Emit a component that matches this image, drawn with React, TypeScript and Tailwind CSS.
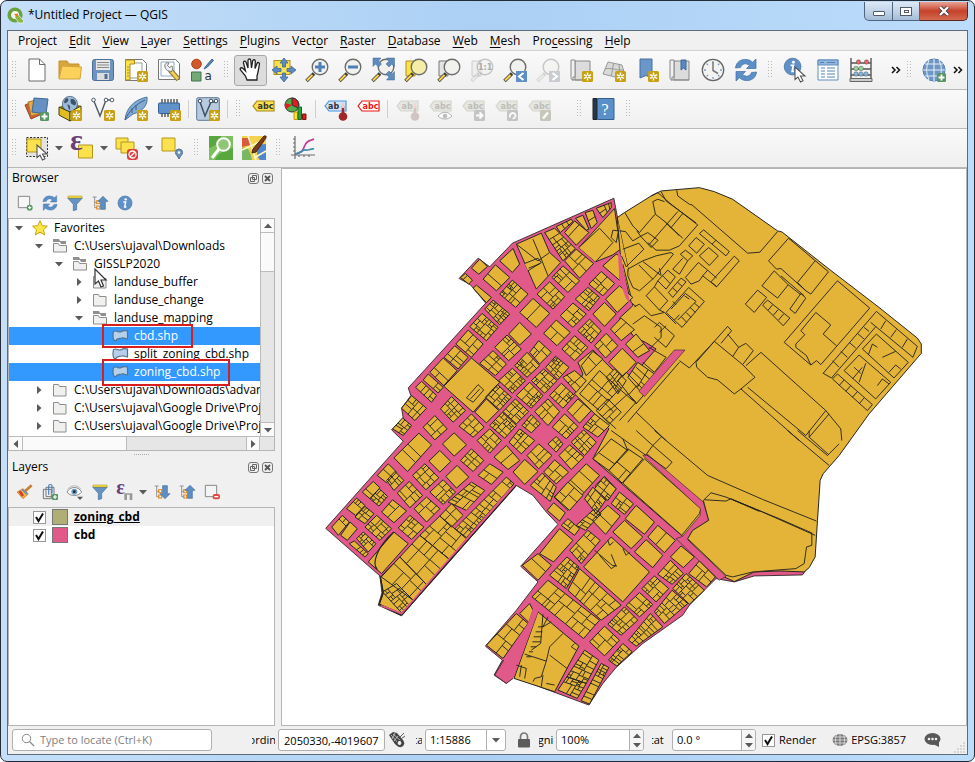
import React from "react";

/* ---------- shared drawing pieces ---------- */

type Kids = { children?: React.ReactNode };

function Ico({ children, s = 24 }: Kids & { s?: number }) {
  return (
    <svg width={s} height={s} viewBox="0 0 24 24" fill="none" className="block shrink-0 overflow-visible" aria-hidden="true">
      {children}
    </svg>
  );
}

const Badge = () => (
  <g>
    <rect x="13" y="13" width="11" height="11" rx="1.5" fill="#c8a011" />
    <path d="M18.5 14.6v7.8M14.9 16.6l7.2 3.8M22.1 16.6l-7.2 3.8" stroke="#fff" strokeWidth="1.5" />
    <circle cx="18.5" cy="18.5" r="1" fill="#c8a011" />
  </g>
);

const Plus = () => (
  <g>
    <rect x="15" y="15" width="9" height="9" rx="1.5" fill="#589464" />
    <path d="M19.5 16.5v6M16.5 19.5h6" stroke="#fff" strokeWidth="1.8" />
  </g>
);

const Lens = ({ fill = "#f1f1ee", faint = false }: { fill?: string; faint?: boolean }) => (
  <g opacity={faint ? 0.35 : 1}>
    <path d="M9 15.5 1.5 23" stroke={faint ? "#999" : "#3f3f3f"} strokeWidth="3.6" />
    <path d="M7.5 17 2 22.5" stroke={faint ? "#ddd" : "#fcd34a"} strokeWidth="2" />
    <circle cx="15" cy="9" r="7.8" fill={fill} stroke="#6d6e6c" strokeWidth="1.4" />
  </g>
);

const Globe = () => (
  <g>
    <circle cx="12" cy="12" r="11" fill="#6f97c4" stroke="#4f7fb5" />
    <path d="M1 12h22M3 6h18M3 18h18M12 1v22M7 2c-3 6-3 14 0 20M17 2c3 6 3 14 0 20" stroke="#e6eef6" strokeWidth="1.1" />
  </g>
);

const Refresh = () => (
  <g fill="#5b8fc7" stroke="#3f6fa5" strokeWidth=".7">
    <path d="M1.5 10C2 4 7 1 12 1.5c3 .2 5 1.2 6.5 2.700L22 1v9.500h-9.500l3-3C12 4.600 8 5.500 6.500 9.500Z" />
    <path d="M22.500 14C22 20 17 23 12 22.500c-3-.2-5-1.200-6.500-2.700L2 23v-9.500h9.500l-3 3c3.500 2.900 7.500 2 9-2Z" />
  </g>
);

const Info = () => (
  <g>
    <circle cx="12" cy="12" r="10.500" fill="#5f91c8" stroke="#44719f" />
    <circle cx="13" cy="6.500" r="1.800" fill="#fff" />
    <path d="M9.500 10.500h3.500l-1.500 7.500h2.500" stroke="#fff" strokeWidth="2.200" />
  </g>
);

const Funnel = () => (
  <g>
    <path d="M1 4.500h22L14.500 14v8l-5 1.500V14Z" fill="#6493c4" stroke="#3f6c9b" />
    <path d="M1.500 1.500h21v3h-21Z" fill="#fbe24c" stroke="#a98e1c" strokeWidth=".8" />
  </g>
);

const TreeArrow = ({ up }: { up: boolean }) => (
  <g>
    <path d="M1 3h6M4 3v16h4M4 11h4" stroke="#888" strokeWidth="1.300" />
    <rect x="7" y="8.500" width="4.500" height="4.500" stroke="#e58a1a" strokeWidth="1.600" />
    <rect x="7" y="16.500" width="4.500" height="4.500" stroke="#e58a1a" strokeWidth="1.600" />
    <path d={up ? "M16.500 2 24 9.500h-4v12h-7v-12H9Z" : "M16.500 22 24 14.500h-4v-12h-7v12H9Z"} fill="#5d8fc5" stroke="#3d6b9c" />
  </g>
);

const Abc = ({ t = "abc", fill = "#fbe14d", edge = "#a78a18", ink = "#333", x = 6.5 }: { t?: string; fill?: string; edge?: string; ink?: string; x?: number }) => (
  <g>
    <path d="M2 9 6 4h17v10H6Z" fill={fill} stroke={edge} strokeWidth="1.200" />
    <text x={x} y="11.500" fontSize="8" fontWeight="700" fill={ink} fontFamily="DejaVu Sans">{t}</text>
  </g>
);

const GrayAbc = ({ t, children }: Kids & { t?: string }) => (
  <Ico><g opacity=".75"><Abc t={t} fill="#e2e2da" edge="#c9c9c2" ink="#aaaaa5" />{children}</g></Ico>
);

const Pin = ({ c }: { c: string }) => (
  <g><path d="M20 9v8" stroke={c} strokeWidth="2.500" /><path d="M20 6v5" stroke="#f3c9c9" strokeWidth="2.500" /><circle cx="20" cy="19.500" r="4.300" fill={c} /></g>
);

const Arrow = () => <path d="M12 9v12.500l3-2.500 2.500 5 2.500-1.300-2.500-4.700h4.500Z" fill="#fff" stroke="#555" strokeWidth="1.100" />;

const Eps = ({ x, y, s }: { x: number; y: number; s: number }) => (
  <text x={x} y={y} fontSize={s} fill="#6b3f78" fontWeight="700" fontFamily="Liberation Serif">ε</text>
);

/* ---------- toolbar icons ---------- */

const NewIcon = <Ico><path d="M4 1h10.500L20 6.500V23H4Z" fill="#fff" stroke="#6b6b6b" /><path d="M14.500 1v5.500H20" stroke="#6b6b6b" /></Ico>;
const OpenIcon = <Ico><path d="M1 20V3h8l2 3h10v14Z" fill="#d9a53b" stroke="#c0912f" /><path d="m1 21 3-13 19.500 1L22 21Z" fill="#fbd15b" stroke="#d3a33c" /></Ico>;
const SaveIcon = <Ico><rect x="1.500" y="1.500" width="21" height="21" rx="2" fill="#6d94c1" stroke="#4c6f98" /><path d="M5 2h14v10H5Z" fill="#e8e8e8" /><path d="M6 4.500h12M6 7h12M6 9.500h12" stroke="#888" /><path d="M6 15h12v7H6Z" fill="#dcdcdc" /><path d="M13.500 16h3v5h-3Z" fill="#4c6f98" /></Ico>;
const LayoutIcon = <Ico><path d="M1.500 1.500h17l4 4v17h-21Z" fill="#fff" stroke="#777" /><path d="M5 5h13v15H5Z" stroke="#999" /><path d="M1.500 2h9v4H6v16H1.500Z" fill="#fbe04b" stroke="#a98c1f" /><path d="M3 9h2M3 12h2M3 15h2M3 18h2" stroke="#a98c1f" /><Badge /></Ico>;
const ManagerIcon = <Ico><path d="M1.500 1.500h17l4 4v16h-21Z" fill="#fff" stroke="#777" /><path d="M4 4h13v14H4Z" stroke="#91a9c4" /><path d="m13 12 8.500 9.500" stroke="#8a7430" strokeWidth="5" /><path d="m13 12 8 9" stroke="#f0cf54" strokeWidth="3" /><path d="M8 9c-1-4 3-5 4-4l-1.500 2.500 2 2L15 8c1.500 2 .5 5-1 6l-2-1c-2 0-3.500-2-4-4Z" fill="#eee" stroke="#777" /></Ico>;
const StyleIcon = <Ico><circle cx="6.500" cy="6" r="4.800" fill="#d4572a" stroke="#a74420" /><path d="M1.500 14h9.500v9H1.500Z" fill="#73ab77" stroke="#44744a" /><path d="m14 11 2-3 6-7 1.500 1.500-6 6.500Z" fill="#5a86b7" stroke="#3c658f" /><text x="14.500" y="22" fontSize="12" fill="#333" fontFamily="DejaVu Sans">a</text></Ico>;
const HandIcon = <Ico><path d="M8 22 6.500 18 1.500 12c-1-2 1-3 2.500-1.500L6.500 13 4.500 5c-.4-2 2-2.500 2.700-.5L9 10V2.500C9 .5 11.500.5 11.800 2.500L12.500 10l1.200-7c.5-2 2.800-1.500 2.600.5L16 10.500l2-5c.7-1.700 2.800-1 2.400.8L19 14l-1 4v4Z" fill="#fff" stroke="#222" strokeWidth="1.300" /></Ico>;
const PanSelIcon = <Ico><rect x="2" y="2.500" width="16" height="14" fill="#fbe14c" stroke="#ad9020" /><path d="m12 0 4 5h-2.500v4h-3V5H8ZM12 24l4-5h-2.500v-4h-3v4H8ZM0 12l5-4v2.500h4v3H5V16ZM24 12l-5-4v2.500h-4v3h4V16Z" fill="#5e8cc0" stroke="#3d6899" strokeWidth=".8" /></Ico>;
const ZoomInIcon = <Ico><Lens /><path d="M15 4v10M10 9h10" stroke="#4f7fb5" strokeWidth="3" /></Ico>;
const ZoomOutIcon = <Ico><Lens /><path d="M10 9h10" stroke="#4f7fb5" strokeWidth="3.200" /></Ico>;
const ZoomFullIcon = <Ico><Lens /><path d="M2 0h8L7.500 3l3 3-3 3-3-3L2 8.500ZM23.500 0h-8L18 3l-3 3 3 3 3-3 2.500 2.500ZM23.500 22h-8l2.500-3-3-3 3-3 3 3 2.500-2.500Z" fill="#5f8cbd" stroke="#3d6899" strokeWidth=".5" /></Ico>;
const ZoomSelIcon = <Ico><path d="M2 3h9v15H2Z" fill="#fbe14c" stroke="#ad9020" /><Lens fill="#f5ecaa" /></Ico>;
const ZoomLayerIcon = <Ico><path d="M2 3h9v15H2Z" fill="#e4e4e4" stroke="#777" /><Lens /></Ico>;
const ZoomNativeIcon = <Ico><path d="M2 3h9v15H2Z" fill="#eee" stroke="#ccc" /><Lens faint /><text x="8" y="12" fontSize="8" fontWeight="700" fill="#aaa" fontFamily="DejaVu Sans">1:1</text></Ico>;
const ZoomLastIcon = <Ico><Lens /><rect x="13" y="13" width="11" height="11" fill="#5f8fc6" /><path d="m20.500 15-4.500 3.500 4.500 3.500" stroke="#fff" strokeWidth="2" /></Ico>;
const ZoomNextIcon = <Ico><Lens faint /><rect x="13" y="13" width="11" height="11" fill="#c9cdd1" /><path d="m16.500 15 4.500 3.500-4.500 3.500" stroke="#fff" strokeWidth="2" /></Ico>;
const Scroll = () => <g><path d="M6 3h15v19H6Z" fill="#dcdcdc" stroke="#888" /><path d="M2 2h4v17H4v3c-2 0-2-2-2-4Z" fill="#f0f0f0" stroke="#888" /><path d="M3 22h18" stroke="#888" /></g>;
const MapViewIcon = <Ico><Scroll /><Badge /></Ico>;
const View3dIcon = <Ico><path d="m1 16 5-12 14 3 3 11-10 1Z" fill="#d9d9d6" stroke="#999" /><path d="M3 11c6-2 12 2 19 1M12 5c-2 4-1 8-3 13M17 6l1 12" stroke="#999" /><Badge /></Ico>;
const BookmarkIcon = <Ico><path d="M5 1h12v19l-6-2.500L5 20Z" fill="#6a97c9" stroke="#44719f" /><Badge /></Ico>;
const BookmarksIcon = <Ico><Scroll /><path d="M13 2h5v10l-2.500-2L13 12Z" fill="#5a89bf" stroke="#3d6899" /></Ico>;
const ClockIcon = <Ico><circle cx="12" cy="12" r="10.700" fill="#f3f3f1" stroke="#666" strokeWidth="1.300" /><path d="M12 3v2M12 19v2M3 12h2M19 12h2M5.600 5.600 7 7M17 17l1.400 1.400M5.600 18.400 7 17M17 7l1.400-1.400" stroke="#7b9cc0" strokeWidth="1.300" /><path d="M12 4v8.500l5 3" stroke="#777" strokeWidth="1.500" /></Ico>;
const RefreshIcon = <Ico><Refresh /></Ico>;
const IdentifyIcon = <Ico><g transform="translate(0 -1) scale(.8)"><Info /></g><Arrow /></Ico>;
const TableIcon = <Ico><path d="M2 2h20v20H2Z" fill="#fff" stroke="#5f8dbd" /><path d="M2 2h20v5H2Z" fill="#93b7de" stroke="#5f8dbd" /><path d="M5 10h4M5 13h4M5 16h4M5 19h4M11 10h8M11 13h8M11 16h8M11 19h8M4 4.500h4M11 4.500h8" stroke="#5782b0" /></Ico>;
const AbacusIcon = <Ico><path d="M2 0v22M22 0v22M2 5h20M2 11h20M2 17h20" stroke="#555" strokeWidth="1.400" /><path d="M1 20.500h22v3H1Z" fill="#ccc" stroke="#666" /><g stroke="#555" strokeWidth=".5"><g fill="#ee6565"><circle cx="9.500" cy="4" r="2.200" /><circle cx="17.500" cy="4" r="2.200" /></g><g fill="#94d69a"><circle cx="7" cy="10.500" r="2.300" /><circle cx="12" cy="10.500" r="2.300" /></g><g fill="#86b8e4"><circle cx="7" cy="16" r="2.200" /><circle cx="12" cy="16" r="2.200" /><circle cx="17" cy="16" r="2.200" /></g></g></Ico>;
const WebIcon = <Ico><Globe /><Plus /></Ico>;

const SourcesIcon = <Ico><path d="m0 8 12-5 5 14-11 5Z" fill="#d25c34" stroke="#9b4325" /><path d="m3 5 12-3 3 14-12 3Z" fill="#e5a84a" stroke="#aa782b" /><path d="m9 1 14 1-2 15-14-2Z" fill="#6490c2" stroke="#3f6997" /><Plus /></Ico>;
const GeoPkgIcon = <Ico><path d="m1 10 11-5 11 4-11 6Z" fill="#8f7a17" /><g transform="translate(4 -1) scale(.66)"><circle cx="12" cy="12" r="11.500" fill="#9cb9d8" stroke="#3c536b" /><path d="M5 4c4-2 6 1 4 4s-5 4-6 1ZM13 5c5-2 9 3 8 7s-7 1-8-2ZM8 13c4 0 6 4 3 9Z" fill="#3c536b" /></g><path d="M1 10 12 15v9L1 18Z" fill="#e1be1d" stroke="#413c19" /><path d="m12 15 11-6v9l-11 6Z" fill="#fcf054" stroke="#413c19" /><Badge /></Ico>;
const ShapeIcon = <Ico><path d="M2.500 3 9 19l6-16 6 0" stroke="#505a66" strokeWidth="1.400" /><g fill="#fff" stroke="#505a66"><circle cx="2.500" cy="3" r="1.800" /><circle cx="15" cy="3" r="1.800" /><circle cx="21" cy="3" r="1.800" /></g><Badge /></Ico>;
const FeatherIcon = <Ico><path d="M1 23C2 12 9 3 23 0c1 7-3 14-14 17Z" fill="#83abd2" stroke="#4b76a3" /><path d="M1 23C5 14 12 7 21 3M8 11v5M12 8v5" stroke="#355f8c" /><Badge /></Ico>;
const ChipIcon = <Ico><path d="M5 2v4M8 2v4M11 2v4M14 2v4M17 2v4M20 2v4M5 16v4M8 16v4M11 16v4" stroke="#444" strokeWidth="1.300" /><rect x="1.500" y="6" width="21" height="10.500" rx="1" fill="#5f92ca" stroke="#345f8f" /><Badge /></Ico>;
const VirtualIcon = <Ico><rect x=".7" y=".7" width="22.600" height="22.600" rx="1.500" fill="#b7cae0" stroke="#5e7896" /><path d="m4 5 5 14 6-14 4 0" stroke="#3d4f63" strokeWidth="1.500" /><g fill="#fff" stroke="#3d4f63"><circle cx="4" cy="4" r="1.800" /><circle cx="15" cy="4" r="1.800" /><circle cx="20" cy="4" r="1.800" /></g><Badge /></Ico>;
const LabelIcon = <Ico><Abc /></Ico>;
const DiagramIcon = <Ico><circle cx="8" cy="8" r="7" fill="#4fae48" stroke="#333" /><path d="M8 8V1a7 7 0 0 1 6 10Z" fill="#dd1d24" stroke="#333" /><path d="M8 8 2 12a7 7 0 0 1-1-6Z" fill="#dd1d24" /><path d="M10 15h3.500v7.500H10Z" fill="#fae12c" stroke="#c99a00" /><path d="M14 10h3.500v12.500H14Z" fill="#2aa23a" stroke="#17662a" /><path d="M18.500 17H22v5.500h-3.500Z" fill="#d51f1f" stroke="#811" /></Ico>;
const PinLabelIcon = <Ico><Abc t="ab" fill="#cfe3fb" edge="#4696e5" x={5} /><Pin c="#a32626" /></Ico>;
const RedLabelIcon = <Ico><Abc fill="#fff" edge="#f01414" ink="#f01414" /></Ico>;
const HelpIcon = <Ico><path d="M1 1.500h4v21H1Z" fill="#24384d" stroke="#222" /><path d="M5.500 1.500H22v21H5.500Z" fill="#5b8fc9" stroke="#345f8f" /><text x="9.500" y="18" fontSize="16" fill="#fff" fontFamily="Liberation Serif">?</text></Ico>;
const Ylw = "#fbe14c";
const YlwEdge = "#b5961c";
const SelectIcon = <Ico><rect x="1.500" y="1.500" width="21" height="19" fill="#e2e2e2" stroke="#333" strokeDasharray="2 1.500" /><path d="M2 3h14v13H2Z" fill={Ylw} stroke={YlwEdge} /><Arrow /></Ico>;
const SelExprIcon = <Ico><path d="M8.500 9h14v13h-14Z" fill={Ylw} stroke={YlwEdge} /><Eps x={0} y={14} s={30} /></Ico>;
const DeselectIcon = <Ico><path d="M1 2h12v11H1Z" fill={Ylw} stroke={YlwEdge} /><path d="M6 6h13v11H6Z" fill={Ylw} stroke={YlwEdge} /><rect x="12" y="13" width="11" height="11" rx="3" fill="#e13c3c" /><circle cx="17.500" cy="18.500" r="3.500" stroke="#fff" strokeWidth="1.300" /><path d="m15 21 5-5" stroke="#fff" strokeWidth="1.300" /></Ico>;
const SelLocIcon = <Ico><path d="M2 2h13v13H2Z" fill={Ylw} stroke={YlwEdge} /><path d="M19 23c-1-3-3.500-4-3.500-6.500a3.500 3.500 0 0 1 7 0C22.500 19 20 20 19 23Z" fill="#6c94bd" stroke="#4b708f" /><circle cx="19" cy="16.500" r="1.200" fill="#fff" /></Ico>;
const QuickOsmIcon = <Ico><rect width="24" height="24" fill="#58a83f" /><path d="M0 12c8-2 12-8 12-12h12v12C16 14 8 18 6 24H0Z" fill="#7dc05f" /><path d="M10.500 12.500 3 22" stroke="#fff" strokeWidth="3" /><circle cx="14.500" cy="8.500" r="6.300" fill="#8fc675" stroke="#fff" strokeWidth="2" /></Ico>;
const OsmIcon = <Ico><rect width="24" height="24" fill="#f3d34d" /><path d="M0 12c6-2 8 2 10 12H0Z" fill="#79b763" /><path d="M0 2h7l2 7-9 2Z" fill="#d95a3e" /><path d="M13 9c5 4-1 8 5 15h6V8Z" fill="#4f86cf" /><path d="M0 14 24 3M6 0l8 24M12 22l12-7" stroke="#fff6c4" strokeWidth="1.600" /><path d="m10 17 4-1L24 2V0h-2L11 13Z" fill="#7a3d17" stroke="#4d260d" /></Ico>;
const PlotIcon = <Ico><path d="M4 0v23M0 19h24M2 3h2M2 7h2M2 11h2M2 15h2M8 19v2M13 19v2M18 19v2" stroke="#6d6d6d" strokeWidth="1.200" /><path d="M4 18c7-1 7-2 10-9 2-5 5-4 9-6" stroke="#c03a94" strokeWidth="1.700" /><path d="M4 18c5 0 7-5 11-4 3 .7 5-2 8-1" stroke="#3c8da9" strokeWidth="1.700" /></Ico>;

/* ---------- toolbar layout ---------- */

function Tool({ label, active = false, children }: Kids & { label: string; active?: boolean }) {
  return (
    <button
      type="button"
      aria-label={label}
      title={label}
      className={
        active
          ? "flex h-[31px] w-[33px] shrink-0 items-center justify-center rounded-[3px] border border-[#a8a8a8] bg-[#dcdcdc]"
          : "flex h-[31px] w-[33px] shrink-0 items-center justify-center"
      }
    >
      {children}
    </button>
  );
}

function Handle({ first = false }: { first?: boolean }) {
  return (
    <span className={first ? "flex w-3 shrink-0 justify-center" : "flex w-4 shrink-0 justify-center"}>
      <svg width="5" height="18" aria-hidden="true">
        {[0, 3, 6, 9, 12, 15].map((y) => (
          <g key={y} fill="#b9b9b9"><rect y={y} width="1" height="1" /><rect x="3" y={y} width="1" height="1" /></g>
        ))}
      </svg>
    </span>
  );
}

const Sep = () => <span className="flex w-[6px] shrink-0 justify-center"><span className="h-[18px] w-px bg-[#cfcfcf]" /></span>;

function DropArrow({ label }: { label: string }) {
  return (
    <button type="button" aria-label={label} className="flex h-6 w-3 shrink-0 items-center justify-center">
      <Tri dir="down" />
    </button>
  );
}

function Tri({ dir }: { dir: "down" | "right" | "up" | "left" }) {
  const d = { down: "M0 2h8L4 6.500Z", right: "M2 0v8l4.500-4Z", up: "M0 6h8L4 1.500Z", left: "M6 0v8L1.500 4Z" }[dir];
  return <svg width="8" height="8" viewBox="0 0 8 8" aria-hidden="true"><path d={d} fill="#5a5a5a" /></svg>;
}

const bar = "flex items-center overflow-hidden border-b border-[#b9b9b9] bg-linear-to-b from-[#fafafa] to-[#efefef]";

function More({ end = false }: { end?: boolean }) {
  return (
    <button type="button" aria-label="More tools" className={end ? "flex w-4 shrink-0 justify-center" : "flex w-6 shrink-0 justify-end"}>
      <svg width="10" height="8" viewBox="0 0 10 8" aria-hidden="true"><path d="m1 1 3 3-3 3M5.500 1l3 3-3 3" stroke="#111" strokeWidth="1.500" fill="none" /></svg>
    </button>
  );
}

function Toolbars() {
  return (
    <div className="shrink-0">
      <div className={`${bar} h-[39px]`}>
        <Handle first />
        <Tool label="New Project">{NewIcon}</Tool>
        <Tool label="Open Project">{OpenIcon}</Tool>
        <Tool label="Save Project">{SaveIcon}</Tool>
        <Tool label="New Print Layout">{LayoutIcon}</Tool>
        <Tool label="Layout Manager">{ManagerIcon}</Tool>
        <Tool label="Style Manager">{StyleIcon}</Tool>
        <Handle />
        <Tool label="Pan Map" active>{HandIcon}</Tool>
        <Tool label="Pan Map to Selection">{PanSelIcon}</Tool>
        <Tool label="Zoom In">{ZoomInIcon}</Tool>
        <Tool label="Zoom Out">{ZoomOutIcon}</Tool>
        <Tool label="Zoom Full">{ZoomFullIcon}</Tool>
        <Tool label="Zoom to Selection">{ZoomSelIcon}</Tool>
        <Tool label="Zoom to Layer">{ZoomLayerIcon}</Tool>
        <Tool label="Zoom to Native Resolution">{ZoomNativeIcon}</Tool>
        <Tool label="Zoom Last">{ZoomLastIcon}</Tool>
        <Tool label="Zoom Next">{ZoomNextIcon}</Tool>
        <Tool label="New Map View">{MapViewIcon}</Tool>
        <Tool label="New 3D Map View">{View3dIcon}</Tool>
        <Tool label="New Spatial Bookmark">{BookmarkIcon}</Tool>
        <Tool label="Show Spatial Bookmarks">{BookmarksIcon}</Tool>
        <Tool label="Temporal Controller">{ClockIcon}</Tool>
        <Tool label="Refresh">{RefreshIcon}</Tool>
        <Handle />
        <Tool label="Identify Features">{IdentifyIcon}</Tool>
        <Tool label="Open Attribute Table">{TableIcon}</Tool>
        <Tool label="Field Calculator">{AbacusIcon}</Tool>
        <More />
        <Handle />
        <Tool label="Add Web Layer">{WebIcon}</Tool>
        <More end />
      </div>
      <div className={`${bar} h-[39px]`}>
        <Handle first />
        <Tool label="Data Source Manager">{SourcesIcon}</Tool>
        <Tool label="New GeoPackage Layer">{GeoPkgIcon}</Tool>
        <Tool label="New Shapefile Layer">{ShapeIcon}</Tool>
        <Tool label="New SpatiaLite Layer">{FeatherIcon}</Tool>
        <Tool label="New Temporary Scratch Layer">{ChipIcon}</Tool>
        <Sep />
        <Tool label="New Virtual Layer">{VirtualIcon}</Tool>
        <Sep />
        <Handle />
        <Tool label="Layer Labeling Options">{LabelIcon}</Tool>
        <Tool label="Layer Diagram Options">{DiagramIcon}</Tool>
        <Sep />
        <Tool label="Highlight Pinned Labels">{PinLabelIcon}</Tool>
        <Tool label="Toggle Unplaced Labels">{RedLabelIcon}</Tool>
        <Sep />
        <Tool label="Pin Labels"><GrayAbc t="ab"><Pin c="#c9b5b5" /></GrayAbc></Tool>
        <Tool label="Show Labels"><GrayAbc><path d="M10 19c4-5 10-5 14 0-4 4-10 4-14 0Z" fill="#fff" stroke="#999" /><circle cx="17" cy="19" r="2.300" fill="#aaa" /></GrayAbc></Tool>
        <Tool label="Move Label"><GrayAbc><rect x="13" y="13" width="11" height="11" rx="1.500" fill="#b5b5b5" /><path d="M15 18.500h6M18.500 15.500l3 3-3 3" stroke="#fff" strokeWidth="2" /></GrayAbc></Tool>
        <Tool label="Rotate Label"><GrayAbc><rect x="13" y="13" width="11" height="11" rx="1.500" fill="#b5b5b5" /><path d="M16 20.500c-1-5 5-6 5.500-2 .3 2-1.500 2-2.500 3.500" stroke="#fff" strokeWidth="1.800" /></GrayAbc></Tool>
        <Tool label="Change Label"><GrayAbc><rect x="13" y="13" width="11" height="11" rx="1.500" fill="#b9b8a8" /><path d="m16 21.500 5-6" stroke="#fff" strokeWidth="2.300" /></GrayAbc></Tool>
        <span className="w-4" />
        <Handle />
        <Tool label="Help Contents">{HelpIcon}</Tool>
        <Handle />
      </div>
      <div className={`${bar} h-[39px]`}>
        <Handle first />
        <Tool label="Select Features">{SelectIcon}</Tool>
        <DropArrow label="Select options" />
        <Tool label="Select by Expression">{SelExprIcon}</Tool>
        <DropArrow label="Expression options" />
        <Tool label="Deselect Features">{DeselectIcon}</Tool>
        <DropArrow label="Deselect options" />
        <Tool label="Select by Location">{SelLocIcon}</Tool>
        <Handle />
        <Tool label="QuickOSM">{QuickOsmIcon}</Tool>
        <Tool label="OSM Downloader">{OsmIcon}</Tool>
        <Handle />
        <Tool label="Data Plotly">{PlotIcon}</Tool>
      </div>
    </div>
  );
}

/* ---------- title and menu ---------- */

function TitleBar() {
  const glass = "flex h-[19px] items-center justify-center border border-t-0 border-[#4e6580] bg-linear-to-b from-[#dce8f5] via-[#c2d4e8] to-[#a4bdd8]";
  return (
    <header className="flex h-7 shrink-0 items-start">
      <svg width="17" height="17" viewBox="0 0 17 17" className="mt-[5px] shrink-0" aria-hidden="true">
        <circle cx="8" cy="8" r="5.800" fill="#f4f8f0" stroke="#6aa23f" strokeWidth="3.600" />
        <path d="m8 8 3-.5 5.500 6V16H12L8 11Z" fill="#8db94a" stroke="#f4f8f0" strokeWidth=".7" />
        <path d="m7 7 4-.5-.5 4Z" fill="#ee7913" />
      </svg>
      <h1 className="ml-1 mt-[3px] flex-1 text-[12px] leading-5 text-black">*Untitled Project — QGIS</h1>
      <div className="flex">
        <button type="button" aria-label="Minimize" className={`${glass} w-[29px] rounded-bl-[5px]`}>
          <span className="mt-1 h-[5px] w-3 rounded-[1px] border border-[#505a68] bg-white" />
        </button>
        <button type="button" aria-label="Maximize" className={`${glass} w-[27px] border-l-0`}>
          <span className="flex h-[9px] w-3 items-center justify-center border border-[#505a68] bg-white">
            <span className="h-[3px] w-[5px] border border-[#505a68]" />
          </span>
        </button>
        <button type="button" aria-label="Close" className="flex h-[19px] w-12 items-center justify-center rounded-br-[5px] border border-l-0 border-t-0 border-[#5b2721] bg-linear-to-b from-[#e6a294] via-[#c5402a] to-[#d36a4f]">
          <svg width="12" height="10" viewBox="0 0 12 10" aria-hidden="true"><path d="m2 1 8 8M10 1 2 9" stroke="#4b3a44" strokeWidth="4" /><path d="m2 1 8 8M10 1 2 9" stroke="#fff" strokeWidth="2.300" /></svg>
        </button>
      </div>
    </header>
  );
}

const menus: [string, string, string][] = [
  ["Pro", "j", "ect"], ["", "E", "dit"], ["", "V", "iew"], ["", "L", "ayer"], ["", "S", "ettings"], ["", "P", "lugins"],
  ["Vect", "o", "r"], ["", "R", "aster"], ["", "D", "atabase"], ["", "W", "eb"], ["", "M", "esh"], ["Pro", "c", "essing"], ["", "H", "elp"],
];

function MenuBar() {
  return (
    <nav className="flex h-5 shrink-0 items-center border-b border-[#d2d2d2] bg-[#f0f0f0] pl-1">
      {menus.map(([a, u, b]) => (
        <button key={a + u + b} type="button" className="px-[6px] text-[12px] leading-[18px]">
          {a}<span className="underline underline-offset-2">{u}</span>{b}
        </button>
      ))}
    </nav>
  );
}

/* ---------- docks ---------- */

function DockTitle({ name }: { name: string }) {
  const b = "flex size-[11px] items-center justify-center rounded-[3px] border border-[#777]";
  return (
    <div className="flex h-5 shrink-0 items-center gap-[3px] pl-1 pr-[2px]">
      <h2 className="flex-1 text-[12px] leading-5">{name}</h2>
      <button type="button" aria-label={`Float ${name}`} className={b}>
        <svg width="7" height="7" viewBox="0 0 7 7" aria-hidden="true"><path d="M2.500.5h4v4h-4ZM.5 2.500h4v4h-4Z" fill="none" stroke="#666" /></svg>
      </button>
      <button type="button" aria-label={`Close ${name}`} className={b}>
        <svg width="7" height="7" viewBox="0 0 7 7" aria-hidden="true"><path d="m1 1 5 5M6 1 1 6" stroke="#555" strokeWidth="1.800" /></svg>
      </button>
    </div>
  );
}

function Small({ label, children }: Kids & { label: string }) {
  return <button type="button" aria-label={label} title={label} className="flex h-6 w-[25px] shrink-0 items-center justify-center"><Ico s={16}>{children}</Ico></button>;
}

const Folder = ({ open = false }: { open?: boolean }) => (
  <svg width="16" height="16" viewBox="0 0 16 16" aria-hidden="true">
    {open && <path d="M1 1h6l1 2h6v3h-5L8 4H1Z" fill="#8f8f8f" />}
    <path d={open ? "M1.500 5.500h5l1 2h7v6.500h-13Z" : "M1.500 2.500h5l1 2h6.500v9.500h-12.500Z"} fill="#f0f0ee" stroke="#8d8d8d" />
  </svg>
);

const Star = () => <svg width="16" height="16" viewBox="0 0 16 16" aria-hidden="true"><path d="m8 .8 2.200 4.900 5.200.5-3.900 3.500 1.100 5.300L8 12.200 3.400 15l1.100-5.300L.6 6.200l5.200-.5Z" fill="#fde84a" stroke="#c6a10e" /></svg>;

const Poly = () => <svg width="17" height="16" viewBox="0 0 17 16" aria-hidden="true"><path d="M1.500 3.500c3-2 5 2 8 0 2-1.500 4-1 6-.5v8c-3 0-3-2-6-1-3 .8-5 .5-6 3-3-1-2.500-7-2-9.500Z" fill="#b6d0ea" stroke="#55738f" strokeWidth="1.200" /></svg>;

type Row = { level: number; text: string; arrow?: "down" | "right"; kind: "star" | "open" | "folder" | "poly"; on?: boolean };
const rows: Row[] = [
  { level: 0, text: "Favorites", arrow: "down", kind: "star" },
  { level: 1, text: "C:\\Users\\ujaval\\Downloads", arrow: "down", kind: "open" },
  { level: 2, text: "GISSLP2020", arrow: "down", kind: "open" },
  { level: 3, text: "landuse_buffer", arrow: "right", kind: "folder" },
  { level: 3, text: "landuse_change", arrow: "right", kind: "folder" },
  { level: 3, text: "landuse_mapping", arrow: "down", kind: "open" },
  { level: 4, text: "cbd.shp", kind: "poly", on: true },
  { level: 4, text: "split_zoning_cbd.shp", kind: "poly" },
  { level: 4, text: "zoning_cbd.shp", kind: "poly", on: true },
  { level: 1, text: "C:\\Users\\ujaval\\Downloads\\advanc", arrow: "right", kind: "folder" },
  { level: 1, text: "C:\\Users\\ujaval\\Google Drive\\Proje", arrow: "right", kind: "folder" },
  { level: 1, text: "C:\\Users\\ujaval\\Google Drive\\Proje", arrow: "right", kind: "folder" },
];
const indent = ["pl-1", "pl-6", "pl-11", "pl-16", "pl-[84px]"];

function TreeRow({ r }: { r: Row }) {
  return (
    <li className={`relative flex h-[18px] items-center whitespace-nowrap text-[12px] leading-[18px] ${indent[r.level]} ${r.on ? "bg-[#3399ff] text-white" : ""}`}>
      <span className="flex w-[19px] shrink-0 pl-[2px]">{r.arrow && <Tri dir={r.arrow} />}</span>
      <span className="w-[22px] shrink-0">{r.kind === "star" ? <Star /> : r.kind === "poly" ? <Poly /> : <Folder open={r.kind === "open"} />}</span>
      {r.text}
      {r.on && <span className={r.text === "cbd.shp" ? "absolute -top-[3px] left-[93px] z-10 h-6 w-[91px] border-2 border-[#d81f1f]" : "absolute -top-[4px] left-[93px] z-10 h-[27px] w-[128px] border-2 border-[#d81f1f]"} />}
      {r.text === "GISSLP2020" && (
        <svg width="14" height="20" viewBox="0 0 14 20" className="absolute left-[85px] top-[13px] z-10" aria-hidden="true">
          <path d="M1 1v15l3.500-3 2.500 6 2.500-1-2.500-6h5Z" fill="#fff" stroke="#333" strokeWidth="1.200" />
        </svg>
      )}
    </li>
  );
}

function Browser() {
  return (
    <section className="flex flex-col" aria-label="Browser">
      <DockTitle name="Browser" />
      <div className="flex h-[30px] items-center pl-1">
        <Small label="Add Selected Layers"><path d="M2 2h17v17H2Z" fill="#f6f6f6" stroke="#888" strokeWidth="1.500" /><circle cx="19" cy="19" r="4.500" fill="#589464" /><path d="M19 16.500v5M16.500 19h5" stroke="#fff" strokeWidth="1.500" /></Small>
        <Small label="Refresh Browser"><Refresh /></Small>
        <Small label="Filter Browser"><Funnel /></Small>
        <Small label="Collapse All"><TreeArrow up /></Small>
        <Small label="Properties"><Info /></Small>
      </div>
      <div className="border border-[#b5b5b5] bg-white">
        <div className="flex">
          <ul className="h-[217px] min-w-0 flex-1 overflow-hidden">{rows.map((r, i) => <TreeRow key={i} r={r} />)}</ul>
          <div className="flex w-[14px] flex-col border-l border-[#bbb] bg-[#e6e6e6]">
            <button type="button" aria-label="Scroll up" className="flex h-[14px] items-center justify-center border-b border-[#bbb] bg-[#fafafa]"><Tri dir="up" /></button>
            <span className="h-[39px] border-b border-[#bbb] bg-[#fafafa]" />
            <span className="flex-1" />
            <button type="button" aria-label="Scroll down" className="flex h-[14px] items-center justify-center border-t border-[#bbb] bg-[#fafafa]"><Tri dir="down" /></button>
          </div>
        </div>
        <div className="flex h-[14px] border-t border-[#bbb] bg-[#e6e6e6] pr-[14px]">
          <button type="button" aria-label="Scroll left" className="flex w-[14px] items-center justify-center border-r border-[#bbb] bg-[#fafafa]"><Tri dir="left" /></button>
          <span className="w-[104px] border-r border-[#bbb] bg-[#fafafa]" />
          <span className="flex-1" />
          <button type="button" aria-label="Scroll right" className="flex w-[14px] items-center justify-center border-x border-[#bbb] bg-[#fafafa]"><Tri dir="right" /></button>
        </div>
      </div>
    </section>
  );
}

function LayerRow({ id, name, swatch, current = false }: { id: string; name: string; swatch: string; current?: boolean }) {
  return (
    <li className={current ? "flex h-[18px] items-center bg-[#f0f0f0] pl-6" : "flex h-[18px] items-center pl-6"}>
      <Check id={id} />
      <span className={`ml-[6px] size-4 border border-[#777] ${swatch}`} />
      <label htmlFor={id} className={current ? "ml-[6px] text-[12px] font-bold leading-[18px] underline" : "ml-[6px] text-[12px] font-bold leading-[18px]"}>{name}</label>
    </li>
  );
}

function Check({ id }: { id: string }) {
  return (
    <span className="relative inline-flex size-[13px] shrink-0">
      <input id={id} type="checkbox" defaultChecked className="peer size-[13px] appearance-none border border-[#999] bg-white" />
      <svg width="13" height="13" viewBox="0 0 13 13" className="pointer-events-none absolute inset-0 hidden peer-checked:block" aria-hidden="true"><path d="m3 6 2.500 4L10 2.500" fill="none" stroke="#111" strokeWidth="2" /></svg>
    </span>
  );
}

function Layers() {
  return (
    <section className="flex min-h-0 flex-1 flex-col" aria-label="Layers">
      <DockTitle name="Layers" />
      <div className="flex h-[30px] items-center pl-1">
        <Small label="Layer Styling"><path d="m0 12 9-5 8 8-8 7Z" fill="#f2b63c" stroke="#c8671c" /><path d="m4 11 5 7" stroke="#d33b31" strokeWidth="4" /><path d="m8 8 7 7" stroke="#6493c4" strokeWidth="3" /><path d="m12 11 10-9" stroke="#c38231" strokeWidth="4" /></Small>
        <Small label="Add Group"><path d="M2 8h12v14H2ZM6 5h12v14H6Z" fill="#eee" stroke="#777" strokeWidth="1.500" /><path d="M10 16V3c0-3 5-3 5 0v11" stroke="#4f7fb5" strokeWidth="1.800" /><Plus /></Small>
        <Small label="Manage Map Themes"><path d="M0 12C5 3 17 3 22 12c-5 7-17 7-22 0Z" fill="#fff" stroke="#777" strokeWidth="1.300" /><circle cx="11" cy="11.500" r="4.500" fill="#6f99c8" /><circle cx="11" cy="11.500" r="2" fill="#222" /><path d="M1 8C6 1 16 1 21 8" stroke="#999" /><path d="M15 19h9l-4.500 5Z" fill="#555" /></Small>
        <Small label="Filter Legend"><Funnel /></Small>
        <Small label="Filter by Expression"><Eps x={-1} y={15} s={30} /><path d="M12 24v-9h10v9M14 16v8M20 16v8" stroke="#999" strokeWidth="2" /></Small>
        <DropArrow label="Filter options" />
        <Small label="Expand All"><TreeArrow up={false} /></Small>
        <Small label="Collapse All"><TreeArrow up /></Small>
        <Small label="Remove Layer"><path d="M2 2h17v17H2Z" fill="#f4f4f4" stroke="#888" strokeWidth="1.500" /><rect x="13" y="15" width="11" height="8" rx="3" fill="#e34848" /><path d="M15.500 19h6" stroke="#fff" strokeWidth="2" /></Small>
      </div>
      <ul className="min-h-0 flex-1 border border-[#b5b5b5] bg-white">
        <LayerRow id="layer-zoning" name="zoning_cbd" swatch="bg-[#b0ad75]" current />
        <LayerRow id="layer-cbd" name="cbd" swatch="bg-[#e15989]" />
      </ul>
    </section>
  );
}

/* ---------- map ---------- */

type P = [number, number];
const GOLD = "#e3b437";
const PINK = "#e15989";
const INK = "#25241f";

/* blocks: parcel count followed by the corner coordinates */
const north: number[][] = [
  [1, 455, 262, 480, 235, 503, 257, 477, 280], [2, 422, 290, 437, 278, 458, 298, 447, 310], [1, 460, 322, 470, 313, 515, 350, 500, 366],
  [2, 490, 295, 527, 252, 570, 290, 530, 330], [1, 540, 240, 580, 203, 600, 250, 578, 275], [16, 540, 340, 578, 298, 625, 340, 588, 380],
  [20, 495, 385, 520, 358, 570, 400, 540, 432], [18, 450, 438, 487, 398, 535, 440, 500, 480], [6, 408, 490, 445, 448, 490, 490, 455, 530],
  [5, 373, 530, 405, 495, 445, 530, 415, 565], [3, 330, 575, 370, 532, 412, 570, 372, 615], [3, 310, 598, 325, 580, 370, 620, 355, 637],
  [5, 287, 620, 305, 602, 350, 645, 335, 665], [1, 372, 617, 455, 532, 540, 605, 460, 695], [8, 245, 683, 275, 645, 320, 683, 285, 720],
  [8, 218, 745, 248, 712, 275, 735, 250, 765], [5, 310, 740, 345, 705, 382, 745, 345, 778], [13, 362, 685, 395, 648, 437, 690, 400, 725],
  [1, 465, 695, 500, 655, 537, 690, 500, 727], [7, 418, 737, 455, 700, 493, 740, 460, 770], [18, 675, 155, 705, 142, 767, 203, 730, 240],
  [3, 710, 137, 755, 115, 760, 122, 722, 155], [2, 735, 155, 765, 120, 808, 155, 770, 193], [1, 768, 112, 790, 103, 808, 145, 800, 148],
  [2, 797, 95, 820, 88, 833, 125, 815, 143], [4, 830, 82, 875, 65, 875, 80, 850, 110], [5, 735, 240, 770, 205, 822, 248, 780, 292],
  [9, 697, 290, 730, 255, 780, 300, 745, 335], [11, 652, 340, 690, 303, 735, 348, 700, 385], [2, 600, 395, 640, 353, 690, 398, 650, 440],
  [1, 567, 460, 600, 425, 635, 460, 600, 493], [8, 525, 500, 562, 463, 605, 505, 567, 540], [8, 480, 548, 520, 510, 560, 550, 527, 585],
  [3, 672, 458, 710, 418, 752, 455, 712, 495], [7, 722, 405, 760, 367, 800, 400, 760, 440], [13, 767, 355, 805, 320, 840, 350, 808, 390],
  [6, 808, 310, 845, 272, 885, 308, 850, 345], [1, 850, 255, 890, 220, 902, 225, 902, 300], [1, 858, 355, 900, 315, 940, 350, 893, 395],
  [1, 820, 400, 855, 365, 890, 400, 855, 437], [12, 775, 450, 810, 415, 845, 450, 815, 487], [9, 727, 505, 765, 465, 805, 500, 765, 540],
  [2, 873, 445, 905, 412, 945, 447, 905, 480], [4, 825, 495, 860, 458, 895, 495, 858, 532], [1, 868, 545, 908, 503, 950, 545, 910, 587],
  [5, 630, 515, 657, 480, 695, 515, 660, 550], [15, 585, 555, 622, 515, 660, 555, 622, 590], [15, 537, 600, 578, 563, 617, 600, 578, 638],
  [16, 678, 560, 708, 527, 748, 560, 715, 597], [15, 635, 600, 672, 565, 712, 600, 675, 638], [15, 590, 645, 630, 605, 670, 645, 635, 683],
  [15, 497, 650, 533, 612, 575, 650, 540, 688], [13, 550, 693, 587, 655, 627, 693, 590, 730], [18, 510, 735, 548, 695, 590, 735, 555, 773],
  [5, 730, 590, 765, 570, 800, 600, 770, 635], [13, 690, 645, 725, 608, 765, 645, 730, 683], [6, 645, 693, 685, 655, 720, 693, 685, 735],
  [2, 743, 690, 775, 655, 815, 690, 780, 728], [7, 698, 740, 735, 700, 775, 738, 740, 775], [7, 607, 735, 635, 702, 662, 730, 635, 757],
  [8, 790, 740, 825, 700, 870, 735, 835, 770], [8, 780, 640, 840, 570, 900, 625, 840, 690], [5, 830, 690, 865, 655, 905, 695, 870, 730],
  [10, 860, 590, 885, 565, 920, 600, 895, 640], [2, 785, 555, 820, 512, 850, 535, 800, 585], [2, 895, 600, 920, 575, 980, 635, 950, 670],
  [2, 918, 490, 950, 460, 990, 510, 955, 530], [4, 925, 590, 955, 545, 1005, 580, 970, 640],
];
const south: number[][] = [
  [9, 472, 120, 510, 85, 545, 120, 510, 158], [10, 568, 125, 600, 85, 645, 120, 605, 160], [2, 523, 170, 560, 135, 600, 180, 565, 207],
  [1, 580, 215, 615, 177, 655, 213, 615, 252], [5, 622, 165, 657, 130, 697, 165, 657, 205], [5, 685, 130, 710, 108, 730, 130, 710, 155],
  [9, 632, 255, 668, 218, 710, 260, 692, 303], [5, 672, 215, 705, 178, 747, 215, 710, 250], [6, 718, 165, 750, 133, 793, 170, 755, 207],
  [12, 755, 125, 792, 88, 830, 125, 795, 165], [3, 222, 172, 297, 98, 335, 133, 263, 213], [1, 368, 130, 403, 97, 440, 133, 403, 167],
  [1, 327, 182, 360, 150, 393, 183, 360, 215], [8, 422, 180, 455, 145, 492, 180, 460, 213], [1, 378, 228, 412, 195, 447, 230, 410, 263],
  [3, 475, 225, 510, 190, 550, 215, 515, 252], [10, 278, 225, 315, 190, 357, 232, 318, 268], [10, 330, 275, 370, 238, 407, 275, 370, 312],
  [7, 232, 278, 268, 243, 308, 285, 270, 322], [5, 283, 325, 320, 290, 360, 325, 320, 365], [3, 185, 335, 218, 298, 260, 332, 222, 367],
  [9, 235, 383, 270, 345, 312, 380, 275, 417], [2, 172, 225, 205, 190, 230, 215, 200, 247], [6, 200, 240, 225, 213, 252, 240, 222, 270],
  [2, 127, 275, 160, 243, 180, 262, 150, 295], [10, 150, 295, 178, 265, 203, 288, 177, 317], [4, 80, 325, 110, 293, 135, 315, 107, 345],
  [7, 105, 350, 135, 318, 162, 340, 135, 370], [13, 135, 380, 170, 345, 215, 385, 180, 420], [11, 110, 415, 130, 395, 168, 430, 145, 455],
  [3, 35, 380, 67, 345, 88, 365, 55, 405], [1, 62, 405, 90, 365, 112, 385, 82, 420], [4, 88, 430, 103, 422, 145, 460, 135, 470],
  [1, 145, 485, 222, 395, 265, 430, 185, 520], [7, 184, 530, 240, 470, 322, 555, 280, 600], [20, 188, 575, 230, 550, 280, 600, 245, 638],
  [8, 240, 470, 300, 405, 390, 478, 322, 555], [11, 300, 405, 360, 347, 440, 415, 390, 478], [4, 360, 347, 395, 310, 430, 345, 395, 380],
  [12, 385, 305, 455, 245, 495, 270, 440, 330], [30, 405, 385, 560, 230, 583, 250, 440, 412], [5, 703, 290, 800, 190, 840, 225, 745, 330],
  [5, 827, 255, 855, 228, 890, 265, 860, 300],
];
const east: number[][] = [
  [2, 340, 85, 395, 25, 445, 60, 388, 120], [3, 388, 120, 445, 55, 490, 85, 428, 158], [7, 395, 220, 420, 185, 462, 220, 435, 252],
  [8, 345, 175, 372, 140, 410, 175, 385, 210], [2, 338, 270, 385, 225, 422, 257, 378, 312], [1, 400, 305, 435, 270, 490, 320, 455, 355],
  [1, 437, 265, 470, 225, 525, 275, 495, 312], [2, 505, 320, 535, 285, 588, 330, 555, 367], [1, 465, 365, 500, 328, 550, 375, 520, 412],
  [1, 573, 380, 605, 347, 645, 380, 612, 412], [5, 628, 430, 660, 392, 708, 440, 682, 470], [10, 535, 432, 573, 390, 612, 430, 578, 462],
  [20, 580, 475, 620, 430, 675, 480, 630, 522], [11, 487, 475, 525, 437, 568, 475, 530, 515], [9, 440, 525, 480, 487, 520, 523, 480, 560],
  [18, 525, 545, 578, 480, 625, 520, 555, 580], [16, 385, 582, 435, 530, 475, 570, 425, 615], [6, 330, 635, 375, 588, 420, 630, 375, 677],
  [18, 447, 630, 513, 550, 550, 590, 470, 648], [12, 387, 690, 430, 640, 458, 665, 412, 708], [1, 312, 410, 395, 320, 510, 425, 430, 515],
  [11, 270, 360, 325, 300, 362, 330, 305, 400], [20, 210, 435, 262, 380, 298, 410, 260, 475], [18, 157, 500, 205, 450, 360, 570, 312, 625],
  [14, 265, 480, 300, 415, 425, 525, 365, 570], [1, 120, 550, 150, 520, 160, 540, 148, 577], [8, 20, 645, 110, 550, 145, 580, 70, 685],
  [1, 175, 545, 298, 648, 225, 785, 103, 745], [18, 262, 740, 315, 660, 358, 690, 320, 760],
  [14, 235, 780, 262, 740, 320, 760, 293, 805], [13, 305, 812, 365, 700, 388, 712, 330, 822], [1, 180, 370, 240, 295, 280, 330, 222, 395],
  [2, 128, 405, 175, 370, 215, 405, 175, 450], [4, 245, 285, 265, 265, 300, 295, 285, 315], [10, 315, 205, 340, 170, 378, 210, 350, 250],
  [9, 290, 285, 345, 235, 365, 250, 318, 300], [1, 203, 240, 222, 217, 257, 247, 240, 272], [4, 225, 200, 265, 155, 310, 195, 270, 240],
];

let seed = 1;
const rnd = () => {
  seed = (seed * 16807) % 2147483647;
  return seed / 2147483647;
};
const mix = (a: P, b: P, t: number): P => [a[0] + (b[0] - a[0]) * t, a[1] + (b[1] - a[1]) * t];
const len = (a: P, b: P) => Math.hypot(a[0] - b[0], a[1] - b[1]);

/* cuts a four-sided block across its longer side until n parcels are left */
function cut(q: P[], n: number): string {
  if (n <= 1) return "";
  const [a, b, c, d] = q;
  const t = 0.3 + rnd() * 0.4;
  const k = Math.min(n - 1, Math.max(1, Math.round(n * (0.35 + rnd() * 0.3))));
  if (len(a, b) + len(c, d) > len(b, c) + len(a, d)) {
    const m = mix(a, b, t);
    const o = mix(d, c, t);
    return `M${m.map(Math.round)}L${o.map(Math.round)}` + cut([a, m, o, d], k) + cut([m, b, c, o], n - k);
  }
  const m = mix(b, c, t);
  const o = mix(a, d, t);
  return `M${m.map(Math.round)}L${o.map(Math.round)}` + cut([a, b, m, o], k) + cut([o, m, c, d], n - k);
}

function build(blocks: number[][], s: number) {
  seed = s;
  let outline = "";
  let inner = "";
  blocks.forEach(([n, ...c]) => {
    const q: P[] = [[c[0], c[1]], [c[2], c[3]], [c[4], c[5]], [c[6], c[7]]];
    outline += `M${q.map((p) => p.join(" ")).join("L")}Z`;
    inner += cut(q, n);
  });
  return { outline, inner };
}

const northShapes = build(north, 77);
const southShapes = build(south, 991);
const eastShapes = build(east, 4242);

function Blocks({ b }: { b: { outline: string; inner: string } }) {
  return (
    <>
      <path d={b.outline} fill={GOLD} stroke={INK} strokeWidth="3" strokeLinejoin="round" />
      <path d={b.inner} fill="none" stroke={INK} strokeWidth="2.800" />
    </>
  );
}

const cbdOutline = "M883 52 578 187 510 258 475 232 418 293 452 312 498 367 265 622 273 645 245 683 250 712 215 748 250 782 17 1044 180 1187 186 1238 175 1275 245 1307 590 915 640 945 680 995 715 1032 603 1158 655 1205 590 1290 497 1398 548 1440 523 1485 560 1510 580 1490 700 1535 808 1575 850 1510 890 1462 970 1390 1090 1305 1110 1275 1190 1195 1245 1205 1305 1187 1450 1184 1480 1140 1100 500 945 378Z";
const parkland = "M893 110 915 95 995 45 1025 30 1140 20 1185 32 1240 55 1375 150 1388 153 1530 265 1680 380 1795 472 1807 490 1807 518 1650 700 1560 825 1512 880 1503 900 1495 1020 1488 1130 1470 1162 1455 1175 1380 1172 1305 1175 1245 1204 1215 1190 1105 1078 1090 1068 820 835 868 745 848 722 765 640 790 580 775 545 820 508 920 608 1010 505 978 485 945 470 900 412 940 375 925 260Z";

const eastLines = [
  "M232 28 235 45 270 70 278 72 445 217 482 214 535 152", "M155 45 175 35 215 70 295 132 240 195 210 208 170 208 145 185", "M185 32 200 60 290 126",
  "M76 95 100 135 120 155 165 102 168 100 160 62 175 55 195 62", "M168 100 200 125 240 165", "M235 92 150 190", "M250 98 215 140 250 172", "M200 125 215 142",
  "M60 150 78 152 100 180 120 168 145 155 176 178 155 200 125 168 112 150", "M70 205 118 187 133 205 80 258 66 225", "M85 265 130 240 170 225 215 215 222 220 165 290 120 330 100 320 85 285Z",
  "M118 252 160 295", "M130 242 182 282M180 262 185 285", "M268 195 290 170 315 190 292 217Z", "M300 158 313 147 390 212 380 225ZM338 190 350 178", "M300 225 328 200 357 225 330 254Z",
  "M352 318 335 303 405 226 420 240ZM325 268 352 292", "M258 290 297 245 325 268 310 285 352 318", "M258 290 275 310 300 300 310 285", "M243 220 258 208 280 225 265 240ZM265 240 240 280 220 265 250 232",
  "M175 300 205 268 228 288 200 325ZM190 285 212 308", "M140 345 165 318 205 360 180 388ZM165 318 175 300", "M207 335 245 292 260 303 220 350ZM220 322 233 333M235 305 248 316",
  "M200 395 268 320 315 362 248 440ZM215 385 258 338 290 362 235 418M225 418 240 402M262 425 246 408M275 410 260 395M288 395 272 380M300 380 285 367M230 372 220 362M255 345 270 355",
  "M508 240 568 172 688 273 635 340 620 330 595 305 648 240", "M508 240 532 265 545 263 620 330", "M488 315 525 270 567 312 535 352Z", "M438 370 475 328 502 350 465 395Z",
  "M545 285 615 345M567 312 605 342", "M490 373 505 358 572 412 552 435ZM507 388 520 372M523 403 537 386M538 418 553 400", "M572 385 605 338 620 352 588 398Z",
  "M555 485 715 300 812 382 665 552 652 540 635 553Z", "M635 553 622 525 590 500 590 490 617 462 605 450 650 395 695 433 672 460 712 495",
  "M672 578 832 392 955 497 942 530 815 425", "M672 578 697 592 830 438M700 540 720 560M725 512 745 530M750 485 770 502M775 458 795 475M795 440 810 452", "M860 420 845 445M892 447 875 470M925 475 910 500",
  "M790 505 832 460 928 545 885 592ZM850 530 890 512M808 522 820 490 835 500M870 575 890 553 905 565", "M735 570 780 523 875 605 830 655ZM780 605 800 548M760 595 790 560M835 615 850 595 870 610M765 560 785 578",
  "M700 595 715 580 820 672 805 690ZM720 615 735 598M740 632 755 615M760 650 775 633M780 670 795 652",
  "M345 482 430 552 467 590 425 625 405 640 355 598 325 590 292 560 290 545Z", "M345 482 385 437 397 450 365 488M385 460 418 500 400 528M418 500 440 488 462 510 430 552", "M440 555 485 515 680 690 725 745 728 780",
  "M425 625 600 780M445 620 620 765 680 690M630 770 690 700", "M240 540 270 562 345 482", "M110 695 240 545M110 695 200 780M85 725 110 695", "M105 378 120 370 155 405 195 395M180 388 195 395 230 430",
  "M100 430 135 405 185 440 185 470 150 505M165 440 180 425 225 465 200 500 165 470M180 455 200 435", "M148 500 200 530 165 575M130 545 165 575M110 560 155 600", "M30 690 85 640 110 665 60 720M60 625 100 660M0 700 50 745",
];
const bayLines = [
  "M525 0 548 20 685 135 850 207 1012 272", "M395 0 500 75M430 25 445 60M470 0 520 45 500 72", "M520 45 578 95 560 115 500 72", "M520 45 545 20", "M925 0 1050 105M955 0 1045 75 1080 40M990 0 990 20 1048 72",
  "M675 208 740 212 755 205 850 245 1008 315M760 208 840 243", "M345 360 398 405 412 407M360 375 395 415 408 407M395 372 410 408", "M385 330 390 345 402 335M430 355 440 375 450 365",
];
const quayLines = "M190 552 183 640 155 660M175 590 190 590M168 605 188 605M162 620 185 620M158 635 183 635M153 650 170 650M148 665 160 665M140 680 155 680M135 672 200 693 185 740 165 745 160 755M200 693 210 650 250 610M210 675 262 715M110 705 140 715 135 745M125 705 120 740M190 735 185 770M200 760 225 765M205 560 190 590 215 575M285 640 275 650 290 660";

function MapCanvas() {
  return (
    <svg viewBox="0 0 685 557" className="block h-full w-full" role="img" aria-label="Map of the cbd and zoning_cbd layers">
      <g transform="translate(38 12) scale(.333333)" strokeLinejoin="round">
        <path d={cbdOutline} fill={PINK} stroke={INK} strokeWidth="2.600" />
        <path d={parkland} fill={GOLD} stroke={INK} strokeWidth="3" />
        <g fill={GOLD} stroke={INK} strokeWidth="2.800">
          <path d="M590 190 665 157 690 215 723 245 650 325Z" />
          <path d="M590 190 655 240 690 215M640 175 665 235 685 285M615 248 655 232 665 245 625 270M627 262 662 248" />
          <path d="M778 200 885 83 897 165 903 205 880 222 828 243Z" />
          <path d="M778 200 840 142 880 185 828 243M893 110 905 250 935 365 950 378M910 250 935 350M875 170 880 148 897 150 890 185Z" />
        </g>
        <Blocks b={northShapes} />
        <path d="M440 652 475 612 492 628 460 665ZM452 655 480 625" fill="none" stroke={INK} strokeWidth="2.800" />
        <g transform="translate(0 660)">
          <path d="M182 530 190 580 178 612 245 640 320 555 240 470Z" fill={GOLD} stroke={INK} strokeWidth="3" />
          <Blocks b={southShapes} />
          <path d="M180 527 190 575 178 612 245 645M222 395C170 440 155 490 172 508M590 255 245 645" fill="none" stroke={INK} strokeWidth="3.500" />
          <path d="M183 616 245 640 575 262" fill="none" stroke={PINK} strokeWidth="5" />
          <path d="M405 380 510 262 440 335" fill={PINK} stroke={PINK} strokeWidth="6" />
        </g>
        <g transform="translate(480 750)">
          <path d="M430 158 495 85 665 235 660 250 607 315Z" fill={GOLD} stroke={INK} strokeWidth="2.600" />
          <path d="M490 75 505 72 672 215 688 270 640 300 625 328 740 438 720 450 590 325 610 318 662 255 663 235Z" fill={PINK} stroke={INK} strokeWidth="1.800" />
          <Blocks b={eastShapes} />
          <path d="M672 210 695 187 740 200 900 265 998 308 998 345 982 350 975 400 950 415 820 425 760 440 740 435 625 325 640 300 688 270Z" fill={GOLD} stroke={INK} strokeWidth="2.800" />
          <path d="M160 535 175 545 100 745 80 760 45 735 72 690 145 580Z" fill={PINK} stroke={PINK} />
          <path d="M72 690 45 735 80 760 100 745" fill="none" stroke={INK} strokeWidth="2.400" />
          <path d={bayLines.join("") + quayLines} fill="none" stroke={INK} strokeWidth="2.800" />
        </g>
        <g transform="translate(840 0)">
          <path d={eastLines.join("")} fill="none" stroke={INK} strokeWidth="2.800" />
          <path d="M225 508 257 508 135 648 118 632Z" fill={PINK} stroke={INK} strokeWidth="1.800" />
          <path d="M55 215 63 220 92 370 78 350 60 300Z" fill={PINK} />
        </g>
      </g>
    </svg>
  );
}

/* ---------- status bar ---------- */

const field = "h-[22px] rounded-[3px] border border-[#b0b0b0] bg-white text-[11px] leading-5";

function Spin({ id, value, width }: { id: string; value: string; width: string }) {
  return (
    <span className={`${field} ${width} flex shrink-0 overflow-hidden`}>
      <input id={id} defaultValue={value} className="min-w-0 flex-1 pl-1 outline-none" />
      <span className="flex w-[14px] flex-col justify-center border-l border-[#b0b0b0] bg-[#f6f6f6]">
        <button type="button" aria-label="Increase" className="flex h-[9px] items-center justify-center"><Tri dir="up" /></button>
        <button type="button" aria-label="Decrease" className="flex h-[9px] items-center justify-center"><Tri dir="down" /></button>
      </span>
    </span>
  );
}

function Clip({ htmlFor, children, w }: Kids & { htmlFor: string; w: string }) {
  return <label htmlFor={htmlFor} className={`flex shrink-0 justify-center overflow-hidden whitespace-nowrap text-[11px] leading-5 ${w}`}>{children}</label>;
}

function StatusBar() {
  return (
    <footer className="flex h-7 shrink-0 items-center overflow-hidden pl-1">
      <div className={`${field} flex w-[200px] shrink-0 items-center`}>
        <svg width="14" height="14" viewBox="0 0 14 14" className="ml-2 shrink-0" aria-hidden="true"><circle cx="5.500" cy="5.500" r="4.200" fill="none" stroke="#888" /><path d="m8.500 8.500 4.500 4.500" stroke="#888" strokeWidth="1.300" /></svg>
        <input aria-label="Type to locate" placeholder="Type to locate (Ctrl+K)" className="ml-[5px] min-w-0 flex-1 outline-none placeholder:text-[#808080]" />
      </div>
      <span className="min-w-0 flex-1" />
      <Clip htmlFor="coord" w="w-[23px]">Coordinate</Clip>
      <input id="coord" defaultValue="2050330,-4019607" className={`${field} ml-[3px] w-[107px] shrink-0 pl-[5px] outline-none`} />
      <button type="button" aria-label="Toggle extents and mouse position" className="ml-1 shrink-0">
        <svg width="16" height="16" viewBox="0 0 16 16" aria-hidden="true"><path d="m0 3 4-3 4 1 6 7c3 4 0 8-4 7-3-1-5-4-10-12Z" fill="#444" /><path d="m2 3 8 9M4 2l8 7M6 1 3 7M9 4 5 9M11 5l4-4M13 6l3-1" stroke="#ccc" strokeWidth=".8" /><path d="m11 5 4-4M13 6l3-2" stroke="#444" strokeWidth=".8" /><circle cx="10.500" cy="11" r="2.500" fill="#eee" stroke="#333" /></svg>
      </button>
      <Clip htmlFor="scale" w="ml-[11px] w-[6px]">Scale</Clip>
      <span className="relative ml-[3px] shrink-0">
        <select id="scale" className={`${field} block w-[81px] appearance-none pl-1 outline-none`}><option>1:15886</option></select>
        <span className="pointer-events-none absolute right-px top-px flex h-5 w-[19px] items-center justify-center border-l border-[#b0b0b0]"><Tri dir="down" /></span>
      </span>
      <button type="button" aria-label="Lock scale" className="ml-[11px] shrink-0">
        <svg width="14" height="16" viewBox="0 0 14 16" aria-hidden="true"><path d="M3.500 8V4.500a3.500 3.500 0 0 1 7 0V8" fill="none" stroke="#777" strokeWidth="1.700" /><rect x="1" y="7" width="12" height="8.500" rx="1" fill="#5b5b5b" /></svg>
      </button>
      <Clip htmlFor="magnifier" w="ml-2 w-[14px]">Magnifier</Clip>
      <span className="ml-[3px] flex shrink-0"><Spin id="magnifier" value="100%" width="w-[88px]" /></span>
      <Clip htmlFor="rotation" w="ml-2 w-[12px]">Rotation</Clip>
      <span className="ml-2 flex shrink-0"><Spin id="rotation" value="0.0 °" width="w-[84px]" /></span>
      <span className="ml-[6px] flex shrink-0 items-center gap-1"><Check id="render" /><label htmlFor="render" className="text-[11px]">Render</label></span>
      <button type="button" className="ml-4 flex shrink-0 items-center gap-[3px] text-[11px]">
        <svg width="16" height="14" viewBox="0 0 16 14" aria-hidden="true"><ellipse cx="8" cy="7" rx="7.500" ry="6" fill="#777" /><path d="M0 7h16M2 4h12M2 10h12M8 0v14M5 1c-2 4-2 8 0 12M11 1c2 4 2 8 0 12" stroke="#e5e5e5" strokeWidth=".8" fill="none" /></svg>
        EPSG:3857
      </button>
      <button type="button" aria-label="Messages" className="ml-[18px] shrink-0">
        <svg width="18" height="16" viewBox="0 0 18 16" className="block" aria-hidden="true"><ellipse cx="8.500" cy="7" rx="8" ry="6" fill="#585858" /><path d="m9 12 6-3v6Z" fill="#585858" /><g fill="#eee"><circle cx="5" cy="7" r="1.300" /><circle cx="8.500" cy="7" r="1.300" /><circle cx="12" cy="7" r="1.300" /></g></svg>
      </button>
      <svg width="12" height="12" className="ml-3 mr-px shrink-0 self-end" aria-hidden="true"><path d="M9 1h2M6 4h2M9 4h2M3 7h2M6 7h2M9 7h2M0 10h2M3 10h2M6 10h2M9 10h2" stroke="#bbb" /></svg>
    </footer>
  );
}

export default function App() {
  return (
    <div className="flex h-screen flex-col overflow-hidden rounded-[7px] border border-[#252c35] bg-linear-to-r from-[#c5dff9] via-[#abd0f4] to-[#bcdcfb] px-[6px] pb-[6px] pt-px font-['Open_Sans','Noto_Sans',sans-serif] text-[12px] text-black">
      <TitleBar />
      <div className="flex min-h-0 flex-1 flex-col border border-[#5d6b7b] bg-[#f0f0f0]">
        <MenuBar />
        <Toolbars />
        <main className="flex min-h-0 flex-1">
          <div className="flex w-[267px] shrink-0 flex-col">
            <Browser />
            <div className="flex h-[6px] items-center justify-center gap-px" aria-hidden="true">
              {[0, 1, 2, 3, 4, 5, 6, 7].map((i) => <span key={i} className="size-px bg-[#aaa]" />)}
            </div>
            <Layers />
          </div>
          <div className="ml-[6px] min-w-0 flex-1 border border-[#b5b5b5] bg-white"><MapCanvas /></div>
        </main>
        <StatusBar />
      </div>
    </div>
  );
}
